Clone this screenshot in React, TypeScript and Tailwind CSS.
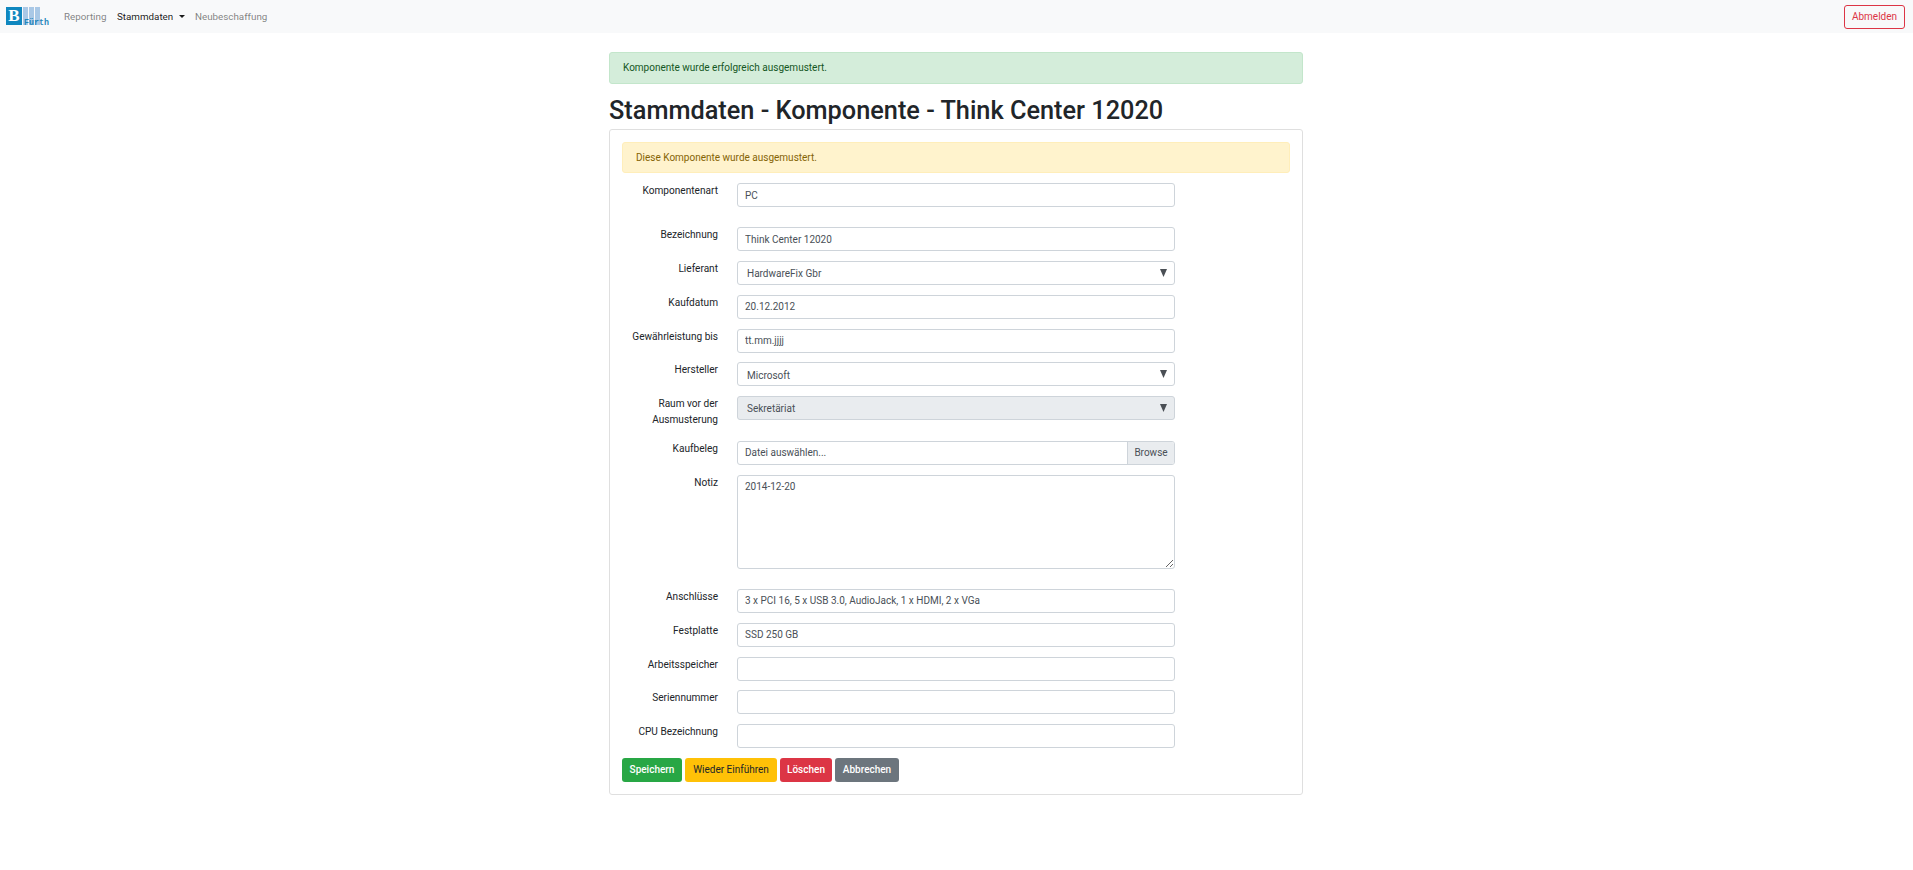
const font = "font-['Roboto','Liberation_Sans',sans-serif]";

const Logo = () => (
	<div className="relative w-[44px] h-[20px] shrink-0">
		<div className="absolute left-0 top-0 w-[16px] h-[18px] bg-[#0f87bf] text-white font-['Liberation_Serif',serif] font-bold text-[17px] leading-[18px] text-center">
			B
		</div>
		<div className="absolute left-[17px] top-0 w-[5px] h-[18px] bg-[#a9c8e6]" />
		<div className="absolute left-[23px] top-0 w-[5px] h-[18px] bg-[#a9c8e6]" />
		<div className="absolute left-[29px] top-0 w-[5px] h-[18px] bg-[#a9c8e6]" />
		<div className="absolute left-[18px] top-[12px] font-['Liberation_Mono',monospace] font-bold text-[8.3px] leading-[7px] text-[#1f86bb]">
			Fürth
		</div>
	</div>
);

const Row = ({ label, children, className = "mb-[9.8px]" }: { label: React.ReactNode; children: React.ReactNode; className?: string }) => (
	<div className={`flex ${className}`}>
		<label className="w-[96px] mr-[19px] text-right text-[10.1px] leading-[15.4px] text-[#212529]">{label}</label>
		<div className="w-[438px]">{children}</div>
	</div>
);

const inputClass =
	"block w-full h-[24px] px-[7px] border border-[#ced4da] rounded-[3px] bg-white text-[#495057] outline-none";

const Input = ({ value = "" }: { value?: string }) => <input readOnly value={value} className={inputClass} />;

const Select = ({ value, disabled = false }: { value: string; disabled?: boolean }) => (
	<div className="relative">
		<select
			disabled={disabled}
			defaultValue={value}
			className={`block w-full h-[24px] pl-[9px] pr-[7px] pt-[2px] border border-[#ced4da] rounded-[3px] text-[#495057] appearance-none outline-none opacity-100 ${disabled ? "bg-[#e9ecef]" : "bg-white"}`}
		>
			<option>{value}</option>
		</select>
		<svg className="absolute right-[8px] top-[8px]" width="7" height="8" viewBox="0 0 7 8">
			<polygon points="0,0 7,0 3.5,8" fill="#4a4f55" />
		</svg>
	</div>
);

const App = () => {
	return (
		<div className={`${font} min-h-screen bg-white text-[10px] leading-[15.4px]`}>
			<nav className="h-[33px] bg-[#f8f9fa] flex items-center pl-[6px] pr-[8px]">
				<Logo />
				<div className="flex items-center ml-[14px] text-[9.8px]">
					<span className="text-[#00000080] w-[53px]">Reporting</span>
					<span className="text-[#000000e6] flex items-center w-[78px]">
						Stammdaten
						<span className="ml-[6px] w-0 h-0 border-x-[3.5px] border-x-transparent border-t-[3.5px] border-t-[#000000e6]" />
					</span>
					<span className="text-[#00000080]">Neubeschaffung</span>
				</div>
				<button className="ml-auto h-[24px] w-[61px] border border-[#dc3545] rounded-[3px] text-[#dc3545]">Abmelden</button>
			</nav>

			<div className="pr-[1px]">
				<main className="w-[694px] mx-auto pt-[19px]">
					<div className="h-[32px] px-[13px] flex items-center border border-[#c3e6cb] rounded-[3px] bg-[#d4edda] text-[#155724]">
						Komponente wurde erfolgreich ausgemustert.
					</div>
					<h2 className="mt-[10px] h-[35px] text-[25.3px] leading-[34px] font-medium text-[#212529] whitespace-nowrap">
						Stammdaten - Komponente - Think Center 12020
					</h2>
					<div className="border border-[#dfdfdf] rounded-[3px] px-[12px] pt-[12px] h-[666px]">
						<div className="h-[31px] px-[13px] mb-[10px] flex items-center border border-[#ffeeba] rounded-[3px] bg-[#fff3cd] text-[#856404]">
							Diese Komponente wurde ausgemustert.
						</div>
						<Row label="Komponentenart" className="mb-[20.2px]"><Input value="PC" /></Row>
						<Row label="Bezeichnung"><Input value="Think Center 12020" /></Row>
						<Row label="Lieferant"><Select value="HardwareFix Gbr" /></Row>
						<Row label="Kaufdatum"><Input value="20.12.2012" /></Row>
						<Row label="Gewährleistung bis"><Input value="tt.mm.jjjj" /></Row>
						<Row label="Hersteller"><Select value="Microsoft" /></Row>
						<Row label={<>Raum vor der<br />Ausmusterung</>} className="mb-[14.2px]"><Select value="Sekretäriat" disabled /></Row>
						<Row label="Kaufbeleg">
							<div className="flex h-[24px] border border-[#ced4da] rounded-[3px] text-[#495057] overflow-hidden">
								<span className="flex-1 px-[7px] flex items-center">Datei auswählen...</span>
								<span className="w-[47px] bg-[#e9ecef] border-l border-[#ced4da] flex items-center justify-center">Browse</span>
							</div>
						</Row>
						<Row label="Notiz" className="mb-[20px]">
							<textarea
								readOnly
								value="2014-12-20"
								className="block w-full h-[94px] px-[7px] py-[3px] border border-[#ced4da] rounded-[3px] text-[#495057] outline-none resize-y"
							/>
						</Row>
						<Row label="Anschlüsse"><Input value="3 x PCI 16, 5 x USB 3.0, AudioJack, 1 x HDMI, 2 x VGa" /></Row>
						<Row label="Festplatte"><Input value="SSD 250 GB" /></Row>
						<Row label="Arbeitsspeicher"><Input /></Row>
						<Row label="Seriennummer"><Input /></Row>
						<Row label="CPU Bezeichnung"><Input /></Row>
						<div className="flex gap-[3px] font-medium">
							<button className="w-[60px] h-[24px] rounded-[3px] bg-[#28a745] text-white">Speichern</button>
							<button className="w-[92px] h-[24px] rounded-[3px] bg-[#ffc107] text-[#212529] font-normal">Wieder Einführen</button>
							<button className="w-[52px] h-[24px] rounded-[3px] bg-[#dc3545] text-white">Löschen</button>
							<button className="w-[64px] h-[24px] rounded-[3px] bg-[#6c757d] text-white">Abbrechen</button>
						</div>
					</div>
				</main>
			</div>
		</div>
	);
};

export default App;
